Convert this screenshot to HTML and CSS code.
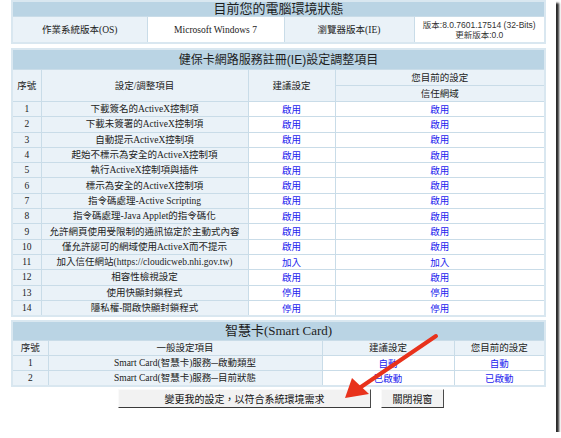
FILE: index.html
```html
<!DOCTYPE html>
<html lang="zh-Hant">

<head>
    <meta charset="UTF-8">
    <title>健保卡網路服務註冊環境檢測</title>
    <link rel="stylesheet" href="styles.css">
</head>

<body>
    <div class="window">
        <table class="grid env">
            <colgroup>
                <col style="width: 135px">
                <col style="width: 137px">
                <col style="width: 130px">
                <col>
            </colgroup>
            <tr><th colspan="4" class="title">目前您的電腦環境狀態</th></tr>
            <tr class="env-row">
                <td class="label">作業系統版本(OS)</td>
                <td class="value">Microsoft Windows 7</td>
                <td class="label">瀏覽器版本(IE)</td>
                <td class="value ver">版本:8.0.7601.17514 (32-Bits)<br>更新版本:0.0</td>
            </tr>
        </table>

        <table class="grid settings">
            <colgroup>
                <col style="width: 29px">
                <col style="width: 207px">
                <col style="width: 87px">
                <col>
            </colgroup>
            <tr><th colspan="4" class="title">健保卡網路服務註冊(IE)設定調整項目</th></tr>
            <tr class="head-row">
                <td rowspan="2" class="label">序號</td>
                <td rowspan="2" class="label">設定/調整項目</td>
                <td rowspan="2" class="label">建議設定</td>
                <td class="label">您目前的設定</td>
            </tr>
            <tr class="head-row"><td class="label">信任網域</td></tr>
            <tr><td class="label">1</td><td class="label">下載簽名的ActiveX控制項</td><td><a>啟用</a></td><td><a>啟用</a></td></tr>
            <tr><td class="label">2</td><td class="label">下載未簽署的ActiveX控制項</td><td><a>啟用</a></td><td><a>啟用</a></td></tr>
            <tr><td class="label">3</td><td class="label">自動提示ActiveX控制項</td><td><a>啟用</a></td><td><a>啟用</a></td></tr>
            <tr><td class="label">4</td><td class="label">起始不標示為安全的ActiveX控制項</td><td><a>啟用</a></td><td><a>啟用</a></td></tr>
            <tr><td class="label">5</td><td class="label">執行ActiveX控制項與插件</td><td><a>啟用</a></td><td><a>啟用</a></td></tr>
            <tr><td class="label">6</td><td class="label">標示為安全的ActiveX控制項</td><td><a>啟用</a></td><td><a>啟用</a></td></tr>
            <tr><td class="label">7</td><td class="label">指令碼處理-Active Scripting</td><td><a>啟用</a></td><td><a>啟用</a></td></tr>
            <tr><td class="label">8</td><td class="label">指令碼處理-Java Applet的指令碼化</td><td><a>啟用</a></td><td><a>啟用</a></td></tr>
            <tr><td class="label">9</td><td class="label">允許網頁使用受限制的通訊協定於主動式內容</td><td><a>啟用</a></td><td><a>啟用</a></td></tr>
            <tr><td class="label">10</td><td class="label">僅允許認可的網域使用ActiveX而不提示</td><td><a>啟用</a></td><td><a>啟用</a></td></tr>
            <tr><td class="label">11</td><td class="label">加入信任網站(https://cloudicweb.nhi.gov.tw)</td><td><a>加入</a></td><td><a>加入</a></td></tr>
            <tr><td class="label">12</td><td class="label">相容性檢視設定</td><td><a>啟用</a></td><td><a>啟用</a></td></tr>
            <tr><td class="label">13</td><td class="label">使用快顯封鎖程式</td><td><a>停用</a></td><td><a>停用</a></td></tr>
            <tr><td class="label">14</td><td class="label">隱私權-開啟快顯封鎖程式</td><td><a>停用</a></td><td><a>停用</a></td></tr>
        </table>

        <table class="grid smart">
            <colgroup>
                <col style="width: 36px">
                <col style="width: 274px">
                <col style="width: 132px">
                <col>
            </colgroup>
            <tr><th colspan="4" class="title serif-title">智慧卡(Smart Card)</th></tr>
            <tr>
                <td class="label">序號</td>
                <td class="label">一般設定項目</td>
                <td class="label">建議設定</td>
                <td class="label">您目前的設定</td>
            </tr>
            <tr><td class="label">1</td><td class="label">Smart Card(智慧卡)服務─啟動類型</td><td><a>自動</a></td><td><a>自動</a></td></tr>
            <tr><td class="label">2</td><td class="label">Smart Card(智慧卡)服務─目前狀態</td><td><a>已啟動</a></td><td><a>已啟動</a></td></tr>
        </table>

        <div class="actions">
            <button class="btn wide">變更我的設定，以符合系統環境需求</button>
            <button class="btn">關閉視窗</button>
        </div>

        <!-- red callout arrow drawn over the page -->
        <svg class="arrow" width="556" height="432" viewBox="0 0 556 432">
            <line x1="436" y1="336" x2="358" y2="389" stroke="#e8321c" stroke-width="4" stroke-linecap="round"/>
            <polygon points="345,398 352,378 369,394" fill="#e8321c"/>
        </svg>
    </div>
</body>

</html>
```

FILE: styles.css
```css
body {
    margin: 0;
    background: #fff;
    font-family: "Liberation Serif", "Noto Sans CJK TC", serif;
    font-size: 9.5px;
    color: #222;
}

.window {
    position: relative;
    width: 556px;
    height: 432px;
    padding: 0 10px 0 11px;
    box-sizing: border-box;
    background: #fff;
    box-shadow: 3px 3px 2px #2a2a2a;
    overflow: hidden;
}

.grid {
    width: 535px;
    border-collapse: collapse;
    table-layout: fixed;
    border: 2px solid #d9e7f0;
}

.grid td,
.grid th {
    border: 1px solid #c9dce8;
    padding: 0;
    text-align: center;
    height: 14px;
    line-height: 12px;
    background: #fff;
    white-space: nowrap;
    overflow: hidden;
}

.grid .title {
    background: #bad4e4;
    font-family: "Liberation Sans", "Noto Sans CJK TC", sans-serif;
    font-weight: normal;
    font-size: 13px;
    line-height: 14px;
    color: #1e1e1e;
    height: 14px;
}

.grid td.label {
    background: #eaf2f8;
}

.env .env-row td {
    height: 25px;
}

.env .ver {
    font-family: "Liberation Sans", "Noto Sans CJK TC", sans-serif;
    font-size: 8.5px;
    line-height: 10px;
    color: #333;
}

.settings {
    margin-top: 4px;
}

.settings .title {
    font-size: 12px;
    height: 19px;
}

.settings .head-row td {
    height: 15px;
}

.settings td {
    height: 14.3px;
}

.smart {
    margin-top: 3px;
}

.smart .serif-title {
    font-family: "Liberation Serif", "Noto Sans CJK TC", serif;
    font-size: 13px;
    height: 18px;
}

.smart td {
    height: 14px;
}

a {
    color: #1c1cee;
    font-family: "Noto Sans CJK TC", sans-serif;
    text-decoration: none;
}

.actions {
    display: flex;
    justify-content: center;
    gap: 10px;
    margin-top: 2px;
    padding-left: 5px;
}

.btn {
    height: 19px;
    padding: 0;
    font-family: "Noto Sans CJK TC", sans-serif;
    font-size: 10px;
    line-height: 16px;
    color: #111;
    background: #f2f2f2;
    border: 1px solid;
    border-color: #fafafa #4a4a4a #3a3a3a #fafafa;
    width: 63px;
}

.btn.wide {
    width: 253px;
}

.arrow {
    position: absolute;
    left: 0;
    top: 0;
    pointer-events: none;
}
```
